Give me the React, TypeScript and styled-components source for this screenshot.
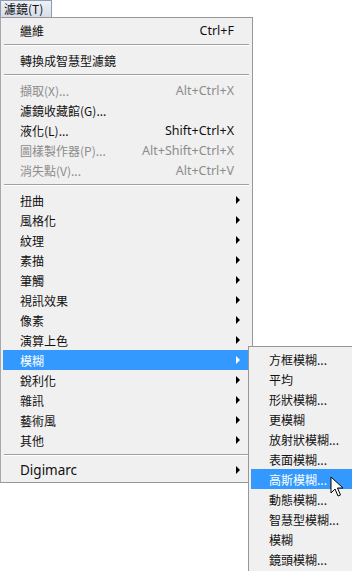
import React from "react";
import styled, { createGlobalStyle } from "styled-components";

const GlobalStyle = createGlobalStyle`
  html, body {
    margin: 0;
    padding: 0;
    background: #ffffff;
  }
  body {
    font-family: "Noto Sans", "Noto Sans CJK TC", sans-serif;
    font-size: 12px;
    color: #111;
  }
`;

const Screen = styled.div`
  position: relative;
  width: 352px;
  height: 571px;
  overflow: hidden;
`;

const MenuBar = styled.div`
  display: flex;
  height: 17px;
`;

const BarButton = styled.div`
  box-sizing: border-box;
  width: 52px;
  height: 17px;
  border: 1px solid #8f9bb0;
  border-bottom: none;
  background: linear-gradient(#eef2f8, #d5dde9);
  font-size: 12px;
  line-height: 15px;
  padding-left: 3px;
  font-family: "Noto Sans CJK TC", sans-serif;
`;

const Menu = styled.div`
  box-sizing: border-box;
  width: 253px;
  background: #f0f0f0;
  border: 1px solid #979797;
  border-left-color: #a8a8a8;
  padding: 2px;
`;

const SubMenu = styled.div`
  position: absolute;
  left: 248px;
  top: 346px;
  box-sizing: border-box;
  width: 104px;
  background: #f0f0f0;
  border: 1px solid #979797;
  border-right: none;
  padding: 2px 0 3px 2px;
`;

const Row = styled.div<{ $active?: boolean; $disabled?: boolean; $sub?: boolean }>`
  display: flex;
  align-items: center;
  height: 20px;
  padding-left: ${(p) => (p.$sub ? "18px" : "17px")};
  padding-right: ${(p) => (p.$sub ? "0" : "5px")};
  background: ${(p) => (p.$active ? "#3399ff" : "transparent")};
  color: ${(p) => (p.$active ? "#ffffff" : p.$disabled ? "#8c8c8c" : "#111111")};
  font-family: "Noto Sans CJK TC", sans-serif;
  font-size: 12px;
  white-space: nowrap;
`;

const Label = styled.span<{ $latin?: boolean }>`
  flex: 1;
  font-family: ${(p) =>
    p.$latin ? '"Noto Sans", sans-serif' : '"Noto Sans CJK TC", sans-serif'};
  font-size: ${(p) => (p.$latin ? "13.5px" : "12px")};
`;

const Shortcut = styled.span`
  font-family: "Noto Sans", sans-serif;
  font-size: 12.5px;
  margin-right: 11px;
`;

const Arrow = styled.span<{ $active?: boolean }>`
  width: 0;
  height: 0;
  border-top: 4px solid transparent;
  border-bottom: 4px solid transparent;
  border-left: 4px solid ${(p) => (p.$active ? "#ffffff" : "#000000")};
  margin-right: 5px;
`;

const Separator = styled.div`
  height: 10px;
  display: flex;
  align-items: center;
  margin: 0 1px;
  &::after {
    content: "";
    display: block;
    width: 100%;
    border-top: 1px solid #a0a0a0;
    border-bottom: 1px solid #ffffff;
  }
`;

const Pointer = styled.svg`
  position: absolute;
  left: 330px;
  top: 476px;
`;

type Item = {
  label: string;
  shortcut?: string;
  disabled?: boolean;
  sub?: boolean;
  active?: boolean;
  latin?: boolean;
};

const group1: Item[] = [{ label: "繼維", shortcut: "Ctrl+F" }];
const group2: Item[] = [{ label: "轉換成智慧型濾鏡" }];
const group3: Item[] = [
  { label: "擷取(X)...", shortcut: "Alt+Ctrl+X", disabled: true },
  { label: "濾鏡收藏館(G)..." },
  { label: "液化(L)...", shortcut: "Shift+Ctrl+X" },
  { label: "圖樣製作器(P)...", shortcut: "Alt+Shift+Ctrl+X", disabled: true },
  { label: "消失點(V)...", shortcut: "Alt+Ctrl+V", disabled: true },
];
const group4: Item[] = [
  "扭曲",
  "風格化",
  "紋理",
  "素描",
  "筆觸",
  "視訊效果",
  "像素",
  "演算上色",
  "模糊",
  "銳利化",
  "雜訊",
  "藝術風",
  "其他",
].map((label) => ({ label, sub: true, active: label === "模糊" }));
const group5: Item[] = [{ label: "Digimarc", sub: true, latin: true }];

const blurItems = [
  "方框模糊...",
  "平均",
  "形狀模糊...",
  "更模糊",
  "放射狀模糊...",
  "表面模糊...",
  "高斯模糊...",
  "動態模糊...",
  "智慧型模糊...",
  "模糊",
  "鏡頭模糊...",
];

function MenuRow({ item }: { item: Item }) {
  return (
    <Row $active={item.active} $disabled={item.disabled}>
      <Label $latin={item.latin}>{item.label}</Label>
      {item.shortcut && <Shortcut>{item.shortcut}</Shortcut>}
      {item.sub && <Arrow $active={item.active} />}
    </Row>
  );
}

export default function App() {
  const groups = [group1, group2, group3, group4, group5];
  return (
    <Screen>
      <GlobalStyle />
      <MenuBar>
        <BarButton>濾鏡(T)</BarButton>
      </MenuBar>
      <Menu>
        {groups.map((g, gi) => (
          <React.Fragment key={gi}>
            {gi > 0 && <Separator />}
            {g.map((item) => (
              <MenuRow key={item.label} item={item} />
            ))}
          </React.Fragment>
        ))}
      </Menu>
      <SubMenu>
        {blurItems.map((label) => (
          <Row key={label} $sub $active={label === "高斯模糊..."}>
            <Label>{label}</Label>
          </Row>
        ))}
      </SubMenu>
      <Pointer width="14" height="22" viewBox="0 0 14 22">
        <path
          d="M1 1 L1 17 L5 13 L8 20 L10.5 19 L7.5 12 L13 12 Z"
          fill="#ffffff"
          stroke="#000000"
          strokeWidth="1"
          strokeLinejoin="miter"
        />
      </Pointer>
    </Screen>
  );
}
